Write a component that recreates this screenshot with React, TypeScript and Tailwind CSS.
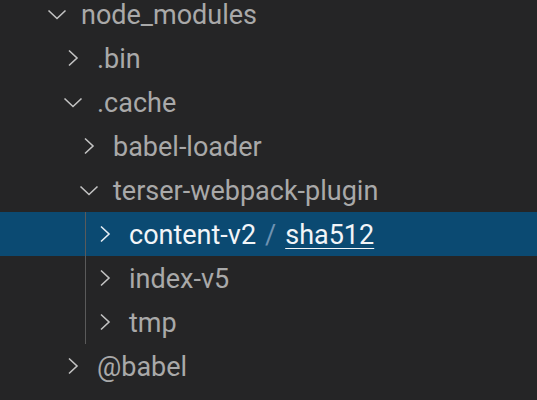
type Node = {
  name: string
  depth: number
  open?: boolean
  selected?: boolean
}

const before: Node[] = [
  { name: 'node_modules', depth: 0, open: true },
  { name: '.bin', depth: 1 },
  { name: '.cache', depth: 1, open: true },
  { name: 'babel-loader', depth: 2 },
  { name: 'terser-webpack-plugin', depth: 2, open: true },
]

const children: Node[] = [
  { name: 'content-v2', depth: 3, selected: true },
  { name: 'index-v5', depth: 3 },
  { name: 'tmp', depth: 3 },
]

const after: Node[] = [{ name: '@babel', depth: 1 }]

function Chevron({ open, selected }: { open?: boolean; selected?: boolean }) {
  const color = selected ? '#e6eef5' : '#c3c3c3'
  return (
    <svg width="24" height="24" viewBox="0 0 24 24" fill="none" className="shrink-0">
      {open ? (
        <path d="M3.5 8.5l8.5 8 8.5-8" stroke={color} strokeWidth="1.6" />
      ) : (
        <path d="M8 4.5l8 7.5-8 7.5" stroke={color} strokeWidth="1.6" />
      )}
    </svg>
  )
}

function Row({ node }: { node: Node }) {
  const pad = ['pl-[45px]', 'pl-[61px]', 'pl-[77px]', 'pl-[93px]'][node.depth]
  return (
    <div
      className={`flex h-[44px] items-center ${pad} ${
        node.selected ? 'bg-[#0b4a72] text-[#f2f5f8]' : 'text-[#a9a9a9]'
      }`}
    >
      <Chevron open={node.open} selected={node.selected} />
      <span className="ml-[12px] whitespace-nowrap pt-[2px]">
        {node.name}
        {node.selected && (
          <>
            <span className="mx-[9px] text-[#6f93b3]">/</span>
            <span className="underline decoration-1 underline-offset-[4px]">sha512</span>
          </>
        )}
      </span>
    </div>
  )
}

export default function App() {
  return (
    <div className="h-[400px] w-[537px] overflow-hidden bg-[#252526] font-['Roboto',sans-serif] text-[27px]">
      <div className="-mt-[8px]">
        {before.map((n) => (
          <Row key={n.name} node={n} />
        ))}
        <div className="relative">
          {children.map((n) => (
            <Row key={n.name} node={n} />
          ))}
          <span className="absolute bottom-0 left-[85px] top-0 w-px bg-[#5a5a5a]" />
        </div>
        {after.map((n) => (
          <Row key={n.name} node={n} />
        ))}
      </div>
    </div>
  )
}
